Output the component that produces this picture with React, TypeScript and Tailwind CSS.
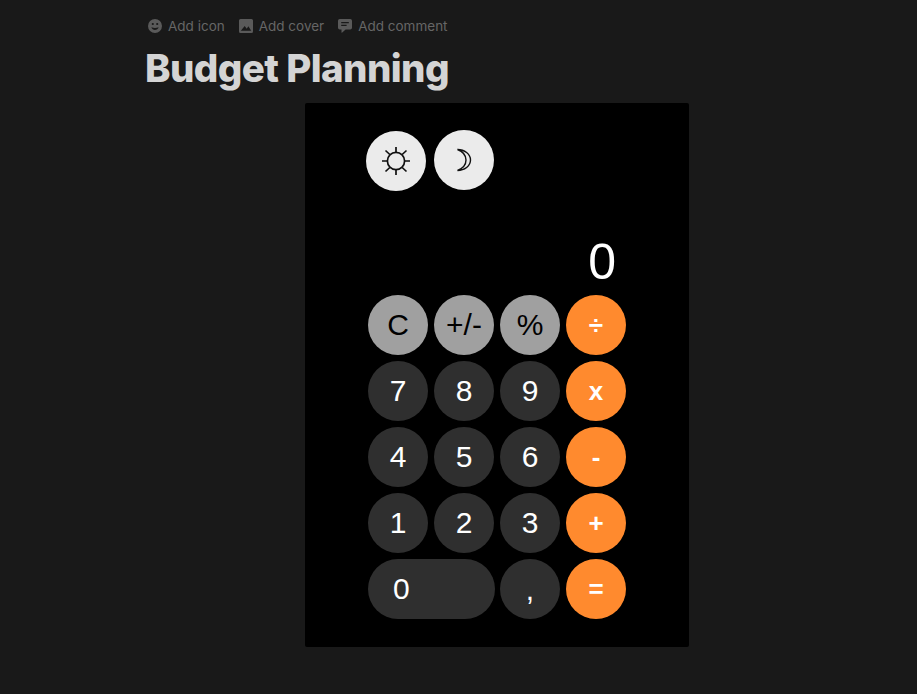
const keys = [
  [
    { label: 'C', kind: 'fn' },
    { label: '+/-', kind: 'fn' },
    { label: '%', kind: 'fn' },
    { label: '÷', kind: 'op' },
  ],
  [
    { label: '7', kind: 'num' },
    { label: '8', kind: 'num' },
    { label: '9', kind: 'num' },
    { label: 'x', kind: 'op' },
  ],
  [
    { label: '4', kind: 'num' },
    { label: '5', kind: 'num' },
    { label: '6', kind: 'num' },
    { label: '-', kind: 'op' },
  ],
  [
    { label: '1', kind: 'num' },
    { label: '2', kind: 'num' },
    { label: '3', kind: 'num' },
    { label: '+', kind: 'op' },
  ],
];

const kindClass: Record<string, string> = {
  fn: 'bg-[#a0a0a0] pb-[2px] text-black text-[30px]',
  num: 'bg-[#2f2f2f] pb-[2px] text-white text-[30px]',
  comma: 'bg-[#2f2f2f] text-white text-[30px]',
  op: 'bg-[#ff8a2e] text-white text-[26px] font-bold',
};

function Key({ label, kind }: { label: string; kind: string }) {
  return (
    <button type="button" className={`flex h-[60px] w-[60px] items-center justify-center rounded-full ${kindClass[kind]}`}>
      {label}
    </button>
  );
}

function Smiley() {
  return (
    <svg viewBox="0 0 14 14" className="h-[14px] w-[14px] fill-[#5a5a5a]">
      <path fillRule="evenodd" d="M7 0a7 7 0 1 1 0 14A7 7 0 0 1 7 0ZM4.800 3.900a1.100 1.100 0 1 0 0 2.200 1.100 1.100 0 0 0 0-2.200Zm4.400 0a1.100 1.100 0 1 0 0 2.200 1.100 1.100 0 0 0 0-2.200ZM3.400 8.200C3.900 9.900 5.300 11 7 11s3.100-1.100 3.600-2.800C9.400 8.700 8.200 8.900 7 8.900s-2.400-.2-3.600-.7Z" />
    </svg>
  );
}

function ImageIcon() {
  return (
    <svg viewBox="0 0 14 14" className="h-[14px] w-[14px] fill-[#5a5a5a]">
      <path fillRule="evenodd" d="M1.500 0h11A1.500 1.500 0 0 1 14 1.500v11a1.500 1.500 0 0 1-1.500 1.500h-11A1.500 1.500 0 0 1 0 12.500v-11A1.500 1.500 0 0 1 1.500 0Zm.3 11.800h10.400L9.400 7.300 7.700 9.700 5.700 6.900 1.800 11.800Z" />
    </svg>
  );
}

function CommentIcon() {
  return (
    <svg viewBox="0 0 14 14" className="h-[14px] w-[14px] fill-[#5a5a5a]">
      <path fillRule="evenodd" d="M1.800 0h10.400A1.800 1.800 0 0 1 14 1.800v7a1.800 1.800 0 0 1-1.800 1.800H7.600L4.300 13.600c-.4.300-.8.100-.8-.4v-2.600H1.800A1.800 1.800 0 0 1 0 8.800v-7A1.800 1.800 0 0 1 1.800 0Zm1.400 3v1.200h7.600V3H3.200Zm0 2.800V7h5.400V5.800H3.200Z" />
    </svg>
  );
}

function SunIcon() {
  return (
    <svg viewBox="0 0 28 28" className="h-[28px] w-[28px] fill-none stroke-[#111] stroke-[1.7]">
      <circle cx="14" cy="14" r="8.600" />
      <path d="M14 0v5.400M14 22.600V28M0 14h5.400M22.600 14H28M3.500 3.500l4.300 4M20.200 20.500l4.300 4M24.500 3.500l-4.300 4M7.800 20.500l-4.300 4" />
    </svg>
  );
}

function MoonIcon() {
  return (
    <svg viewBox="0 0 16 24" className="h-[24px] w-[16px] fill-none stroke-[#111] stroke-[1.4]">
      <path d="M1.500 1.500C8.500 1.500 14.500 6 14.500 12S8.500 22.500 1.500 22.500C6.500 20.500 10 17 10 12S6.500 3.500 1.500 1.500Z" />
    </svg>
  );
}

export default function App() {
  return (
    <div className="min-h-[694px] bg-[#191919] pl-[146px] pt-[18px] font-['Inter',sans-serif]">
      <div className="ml-[2px] flex h-[16px] items-center text-[13.5px] leading-[16px] text-[#666666]">
        <span className="flex items-center gap-[6px]"><Smiley />Add icon</span>
        <span className="ml-[14px] flex items-center gap-[6px]"><ImageIcon />Add cover</span>
        <span className="ml-[14px] flex items-center gap-[6px]"><CommentIcon />Add comment</span>
      </div>
      <h1 className="-ml-px mt-[11px] h-[58px] text-[38.5px] font-extrabold leading-[46px] tracking-[-0.6px] text-[#d4d4d4]">Budget Planning</h1>
      <div className="ml-[159px] h-[544px] w-[384px] rounded-[2px] bg-black pl-[61px] pt-[27px] font-['Liberation_Sans',sans-serif]">
        <div className="flex gap-[8px]">
          <button type="button" className="mt-px flex h-[60px] w-[60px] items-center justify-center rounded-full bg-[#ebebeb]">
            <SunIcon />
          </button>
          <button type="button" className="flex h-[60px] w-[60px] items-center justify-center rounded-full bg-[#ebebeb]">
            <MoonIcon />
          </button>
        </div>
        <div className="mt-[40px] mb-[1px] flex h-[63px] w-[250px] items-center justify-end text-[50px] text-white">0</div>
        <div className="ml-[2px] flex flex-col gap-[6px]">
          {keys.map((row) => (
            <div key={row[0].label} className="flex gap-[6px]">
              {row.map((k) => (
                <Key key={k.label} label={k.label} kind={k.kind} />
              ))}
            </div>
          ))}
          <div className="flex gap-[6px]">
            <button type="button" className="flex h-[60px] w-[127px] items-center rounded-full bg-[#2f2f2f] pb-[2px] pl-[25px] text-[30px] text-white">0</button>
            <div className="-ml-px"><Key label="," kind="comma" /></div>
            <Key label="=" kind="op" />
          </div>
        </div>
      </div>
    </div>
  );
}
